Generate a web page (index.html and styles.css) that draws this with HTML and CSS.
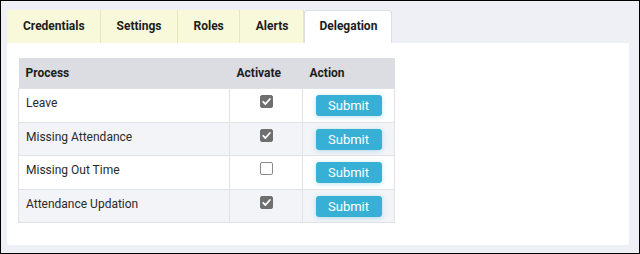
FILE: index.html
```html
<!DOCTYPE html>
<html lang="en">
<head>
    <meta charset="UTF-8">
    <title>Delegation</title>
    <link rel="stylesheet" href="styles.css">
</head>
<body>
    <div class="frame">
        <!-- tabs -->
        <div class="tabs">
            <div class="tab">Credentials</div>
            <div class="tab">Settings</div>
            <div class="tab">Roles</div>
            <div class="tab">Alerts</div>
            <div class="tab active">Delegation</div>
        </div>

        <div class="panel">
            <table class="grid">
                <thead>
                    <tr>
                        <th class="col-process">Process</th>
                        <th class="col-activate">Activate</th>
                        <th class="col-action">Action</th>
                    </tr>
                </thead>
                <tbody>
                    <tr>
                        <td>Leave</td>
                        <td class="center"><span class="check on"><svg viewBox="0 0 13 13" width="13" height="13"><path d="M3.2 6.8 L5.4 9 L9.9 4" fill="none" stroke="#fff" stroke-width="1.8" stroke-linecap="round" stroke-linejoin="round"/></svg></span></td>
                        <td class="center"><button type="button" class="submit-btn">Submit</button></td>
                    </tr>
                    <tr class="alt">
                        <td>Missing Attendance</td>
                        <td class="center"><span class="check on"><svg viewBox="0 0 13 13" width="13" height="13"><path d="M3.2 6.8 L5.4 9 L9.9 4" fill="none" stroke="#fff" stroke-width="1.8" stroke-linecap="round" stroke-linejoin="round"/></svg></span></td>
                        <td class="center"><button type="button" class="submit-btn">Submit</button></td>
                    </tr>
                    <tr>
                        <td>Missing Out Time</td>
                        <td class="center"><span class="check"></span></td>
                        <td class="center"><button type="button" class="submit-btn">Submit</button></td>
                    </tr>
                    <tr class="alt">
                        <td>Attendance Updation</td>
                        <td class="center"><span class="check on"><svg viewBox="0 0 13 13" width="13" height="13"><path d="M3.2 6.8 L5.4 9 L9.9 4" fill="none" stroke="#fff" stroke-width="1.8" stroke-linecap="round" stroke-linejoin="round"/></svg></span></td>
                        <td class="center"><button type="button" class="submit-btn">Submit</button></td>
                    </tr>
                </tbody>
            </table>
        </div>
    </div>
</body>
</html>
```

FILE: styles.css
```css
html, body {
    margin: 0;
    padding: 0;
}

body {
    font-family: Roboto, "Liberation Sans", Arial, sans-serif;
    font-size: 12px;
    color: #222;
    background: #eef0f5;
}

.frame {
    box-sizing: border-box;
    width: 640px;
    height: 254px;
    border: 1px solid #000;
    padding: 9px 10px 7px 6px;
    background: #eef0f5;
}

/* tabs */
.tabs {
    display: flex;
    height: 33px;
}
.tab {
    box-sizing: border-box;
    height: 33px;
    padding: 0 15px 0 16px;
    line-height: 33px;
    font-weight: 700;
    font-size: 12px;
    color: #1c1c1c;
    background: #f8f8da;
    border-right: 1px solid #e6e6bd;
}
.tab.active {
    background: #fff;
    border: 1px solid #dcdee4;
    border-bottom: none;
    border-radius: 4px 4px 0 0;
    padding: 0 14px 0 14px;
    line-height: 31px;
}

.panel {
    background: #fff;
    height: 202px;
    box-sizing: border-box;
    padding: 15px 11px 0 11px;
    border-radius: 0 0 3px 3px;
}

/* table */
.grid {
    border-collapse: collapse;
    width: 377px;
}
.grid th {
    background: #dcdde2;
    height: 30px;
    padding: 0 7px;
    text-align: left;
    font-weight: 700;
    font-size: 12px;
    color: #1c1c1c;
}
.col-process { width: 197px; }
.col-activate { width: 59px; }

.grid td {
    height: 21px;
    padding: 6px 7px 5.5px;
    vertical-align: top;
    border: 1px solid #e0e2e7;
    color: #2a2a2a;
    font-size: 12px;
    line-height: 17px;
}
.grid tr.alt td { background: #f2f4f8; }
.grid td.center { text-align: center; }

.check {
    display: inline-block;
    box-sizing: border-box;
    width: 13px;
    height: 13px;
    border: 1px solid #8a8a8a;
    border-radius: 2px;
    background: #fff;
    vertical-align: top;
}
.check.on {
    background: #6f6f6f;
    border-color: #6f6f6f;
}
.check svg {
    display: block;
    margin: -1px;
}

.submit-btn {
    display: inline-block;
    vertical-align: top;
    width: 66px;
    height: 21px;
    padding: 0;
    border: none;
    border-radius: 3px;
    background: #38b0d5;
    color: #fff;
    font-family: Roboto, "Liberation Sans", Arial, sans-serif;
    font-size: 13px;
    line-height: 21px;
    box-shadow: 0 1px 5px rgba(56, 176, 213, 0.35);
    cursor: pointer;
}
```
